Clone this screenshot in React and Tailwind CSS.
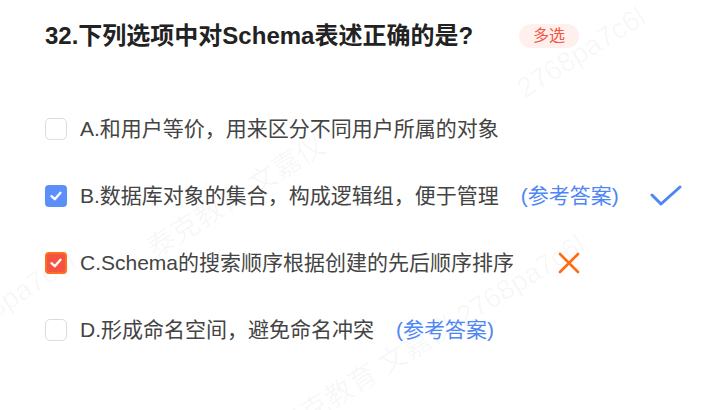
import React from "react";

const font = { fontFamily: '"Liberation Sans", "Noto Sans CJK SC", sans-serif' };

function Box({ state }) {
  if (state === "blue")
    return (
      <div className="w-[22px] h-[22px] rounded-[4px] bg-[#5b8ff9] flex items-center justify-center shrink-0">
        <svg width="14" height="14" viewBox="0 0 14 14"><path d="M2.5 7.2 L5.8 10.2 L11.5 3.8" fill="none" stroke="#fff" strokeWidth="2.4" strokeLinecap="round" strokeLinejoin="round" /></svg>
      </div>
    );
  if (state === "red")
    return (
      <div className="w-[22px] h-[22px] rounded-[4px] bg-[#f4533f] border-2 border-[#ff6d1f] flex items-center justify-center shrink-0">
        <svg width="14" height="14" viewBox="0 0 14 14"><path d="M2.5 7.2 L5.8 10.2 L11.5 3.8" fill="none" stroke="#fff" strokeWidth="2.4" strokeLinecap="round" strokeLinejoin="round" /></svg>
      </div>
    );
  return <div className="w-[22px] h-[22px] rounded-[5px] border border-[#dcdcdc] bg-white shrink-0" />;
}

function Row({ state, children }) {
  return (
    <div className="flex items-center h-[40px]">
      <Box state={state} />
      <div className="ml-[13px] flex items-center text-[21px] text-[#444444]">{children}</div>
    </div>
  );
}

const Ans = () => <span className="text-[#4e86f5]">(参考答案)</span>;

export default function App() {
  return (
    <div className="relative w-[722px] h-[410px] bg-white overflow-hidden" style={font}>
      <div aria-hidden="true" className="pointer-events-none select-none absolute left-[150px] top-[230px] -rotate-[32deg] origin-left text-[28px] text-black/[0.04] whitespace-nowrap">泰克教育 文嘉仪</div>
      <div aria-hidden="true" className="pointer-events-none select-none absolute left-[520px] top-[70px] -rotate-[32deg] origin-left text-[28px] text-black/[0.04] whitespace-nowrap">2768pa7c6l</div>
      <div aria-hidden="true" className="pointer-events-none select-none absolute left-[-10px] top-[290px] -rotate-[32deg] origin-left text-[28px] text-black/[0.04] whitespace-nowrap">8pa7c6l</div>
      <div aria-hidden="true" className="pointer-events-none select-none absolute left-[280px] top-[410px] -rotate-[32deg] origin-left text-[28px] text-black/[0.04] whitespace-nowrap">泰克教育 文嘉仪 2768pa7c6l</div>
      <div className="relative pl-[45px] pt-[20px]">
        <div className="flex items-center h-[32px]">
          <span className="text-[24px] font-bold text-[#222222]">32.下列选项中对Schema表述正确的是?</span>
          <span className="ml-[46px] h-[24px] w-[60px] rounded-full bg-[#fff0ee] text-[#f4533f] text-[16px] flex items-center justify-center">多选</span>
        </div>
        <div className="mt-[57px] flex flex-col gap-[27px]">
          <Row state="none">A.和用户等价，用来区分不同用户所属的对象</Row>
          <Row state="blue">
            <span>B.数据库对象的集合，构成逻辑组，便于管理</span>
            <span className="ml-[22px]"><Ans /></span>
            <svg className="ml-[30px]" width="34" height="22" viewBox="0 0 34 22"><path d="M3 10 L12 19 L31 2" fill="none" stroke="#4e86f5" strokeWidth="3" strokeLinecap="round" strokeLinejoin="round" /></svg>
          </Row>
          <Row state="red">
            <span>C.Schema的搜索顺序根据创建的先后顺序排序</span>
            <svg className="ml-[44px]" width="22" height="22" viewBox="0 0 22 22"><path d="M2 2 L20 20 M20 2 L2 20" fill="none" stroke="#ff6a12" strokeWidth="2.6" strokeLinecap="round" /></svg>
          </Row>
          <Row state="none">
            <span>D.形成命名空间，避免命名冲突</span>
            <span className="ml-[22px]"><Ans /></span>
          </Row>
        </div>
      </div>
    </div>
  );
}
